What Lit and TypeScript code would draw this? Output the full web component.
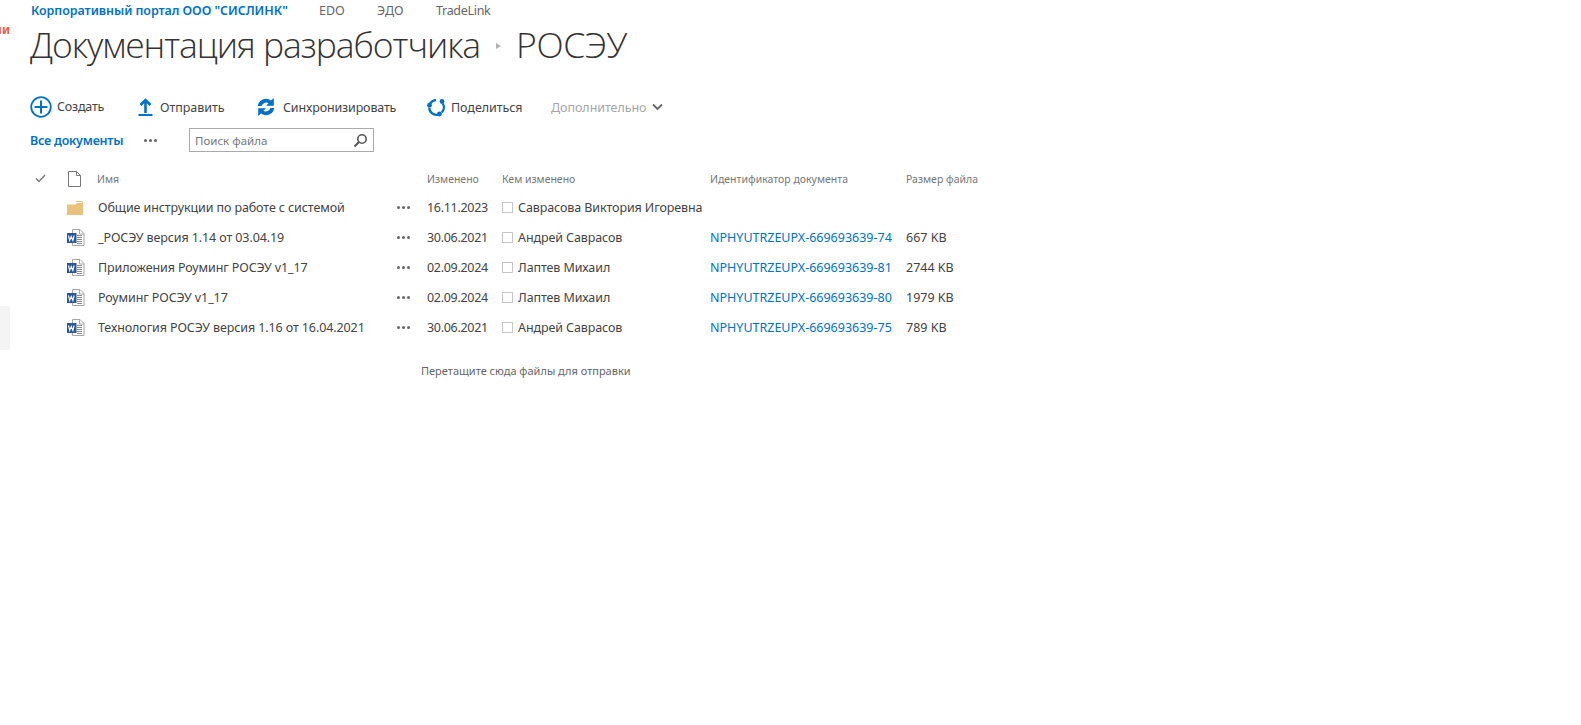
import { LitElement, html, css, svg } from "lit";
import { customElement } from "lit/decorators.js";

const wordIcon = svg`<svg class="ficon" width="18" height="17" viewBox="0 0 18 17">
  <path d="M5.5 .5H13L17 4.5V16.5H5.5Z" fill="#fff" stroke="#a6a6a6"/>
  <path d="M12.5 .5V5H17" fill="none" stroke="#a6a6a6"/>
  <path d="M10 6.5h5M10 8.5h5M10 10.5h5M10 12.5h5M10 14.5h5" stroke="#8a8a8a"/>
  <rect x="0" y="4" width="9.5" height="10" fill="#2b579a"/>
  <path d="M1.5 6.5l1.2 5 1.6-4 1.6 4 1.2-5" fill="none" stroke="#fff" stroke-width="1.1"/>
</svg>`;

const folderIcon = svg`<svg class="ficon" width="16" height="14" viewBox="0 0 16 14">
  <path d="M9 1.5V.5H15.5V2" fill="none" stroke="#e9c27f"/>
  <path d="M0 3.5H8.5L10 2H16V14H0Z" fill="#e9c27f"/>
</svg>`;

interface Row { name: string; date: string; author: string; id: string; size: string; folder?: boolean }

const rows: Row[] = [
  { name: "Общие инструкции по работе с системой", date: "16.11.2023", author: "Саврасова Виктория Игоревна", id: "", size: "", folder: true },
  { name: "_РОСЭУ версия 1.14 от 03.04.19", date: "30.06.2021", author: "Андрей Саврасов", id: "NPHYUTRZEUPX-669693639-74", size: "667 KB" },
  { name: "Приложения Роуминг РОСЭУ v1_17", date: "02.09.2024", author: "Лаптев Михаил", id: "NPHYUTRZEUPX-669693639-81", size: "2744 KB" },
  { name: "Роуминг РОСЭУ v1_17", date: "02.09.2024", author: "Лаптев Михаил", id: "NPHYUTRZEUPX-669693639-80", size: "1979 KB" },
  { name: "Технология РОСЭУ версия 1.16 от 16.04.2021", date: "30.06.2021", author: "Андрей Саврасов", id: "NPHYUTRZEUPX-669693639-75", size: "789 KB" },
];

@customElement("app-root")
export class AppRoot extends LitElement {
  static styles = css`
    :host {
      display: block;
      position: relative;
      width: 1581px;
      height: 725px;
      overflow: hidden;
      background: #fff;
      font-family: "Noto Sans", "Open Sans", sans-serif;
      font-size: 12.5px;
      color: #444;
    }
    .clip { position: absolute; right: calc(100% - 10px); top: 21px; font-size: 12px; font-weight: 700; color: #e8603c; line-height: 18px; white-space: nowrap; }
    .side { position: absolute; left: 0; top: 306px; width: 10px; height: 44px; background: #f4f4f4; }
    .page { padding-left: 30px; display: flex; flex-direction: column; }
    .nav { display: flex; height: 20px; align-items: center; font-size: 12.5px; color: #666; padding-left: 1px; }
    .brand { color: #0072c6; font-weight: 600; width: 288px; white-space: nowrap; letter-spacing: -.06px; }
    .edo { width: 58px; }
    .edo2 { width: 59px; }
    .trade { letter-spacing: -.3px; }
    .title { display: flex; align-items: center; font-size: 35.5px; font-weight: 300; color: #333; height: 48px; font-family: "Open Sans", sans-serif; letter-spacing: -.35px; white-space: nowrap; }
    .t1 { letter-spacing: -1.07px; }
    .tri { width: 0; height: 0; border-left: 5px solid #b1b1b1; border-top: 3.5px solid transparent; border-bottom: 3.5px solid transparent; margin: 4px 15px 0 16px; }
    .cmds { display: flex; align-items: center; height: 30px; margin-top: 24px; font-size: 12.5px; color: #444; }
    .cmd { display: flex; align-items: center; gap: 5px; white-space: nowrap; }
    .cmd svg { display: block; }
    .c1 { width: 108px; letter-spacing: -.2px; }
    .c2 { width: 119px; }
    .c3 { width: 170px; }
    .c4 { width: 124px; }
    .muted { color: #a6a6a6; gap: 5px; }
    .ls { letter-spacing: -.05px; }
    .ls2 { letter-spacing: -.15px; }
    .up { position: relative; top: -1px; }
    .views { display: flex; align-items: center; height: 26px; margin-top: 5px; }
    .all { color: #0072c6; font-weight: 600; width: 114px; white-space: nowrap; letter-spacing: -.22px; }
    .dots { display: flex; gap: 2px; }
    .dots i { width: 3px; height: 3px; border-radius: 50%; background: #666; display: block; }
    .vdots { width: 45px; }
    .search { box-sizing: border-box; width: 185px; height: 24px; border: 1px solid #ababab; display: flex; align-items: center; justify-content: space-between; padding: 0 5px; color: #777; font-size: 11.5px; }
    .table { display: grid; grid-template-columns: 36px 32px 299px 30px 75px 16px 192px 196px auto; grid-template-rows: 29px 29px; grid-auto-rows: 30px; margin-top: 11px; width: 1000px; align-items: center; white-space: nowrap; }
    .table .h { color: #777; font-size: 10.5px; }
    .nudge { margin-left: -1px; }
    .check { padding-left: 5px; }
    .ficon { display: block; margin-left: 1px; }
    .docico { display: block; margin-left: 2px; }
    .box { width: 9px; height: 9px; border: 1px solid #c6c6c6; display: block; }
    .link { color: #0072c6; }
    .name { color: #444; letter-spacing: -.1px; }
    .date { letter-spacing: -.3px; }
    .author { letter-spacing: -.1px; }
    .drop { margin: 19px 0 0 391px; font-size: 11px; color: #666; height: 20px; line-height: 20px; }
  `;

  render() {
    return html`
      <div class="clip">ии</div>
      <div class="side"></div>
      <div class="page">
        <div class="nav">
          <span class="brand">Корпоративный портал ООО "СИСЛИНК"</span>
          <span class="edo">EDO</span><span class="edo2">ЭДО</span><span class="trade">TradeLink</span>
        </div>
        <div class="title"><span class="t1">Документация разработчика</span><span class="tri"></span><span>РОСЭУ</span></div>
        <div class="cmds">
          <div class="cmd c1">
            <svg width="22" height="22" viewBox="0 0 22 22"><circle cx="11" cy="11" r="9.8" fill="none" stroke="#0072c6" stroke-width="1.8"/><path d="M11 4.5v13M4.500 11h13" stroke="#0072c6" stroke-width="2"/></svg>
            <span class="up">Создать</span>
          </div>
          <div class="cmd c2">
            <svg width="15" height="18" viewBox="0 0 15 18"><path d="M7.500 15V2M2.500 7L7.500 2l5 5" fill="none" stroke="#0072c6" stroke-width="2.600"/><path d="M.5 17h14" stroke="#0072c6" stroke-width="2"/></svg>
            <span class="ls" style="margin-left:2px">Отправить</span>
          </div>
          <div class="cmd c3">
            <svg width="18" height="20" viewBox="0 0 18 20"><path d="M.8 9A8.200 8.200 0 0 1 14 3.600L16.800 1V8.800H9L11.600 6.200A4.800 4.800 0 0 0 4.600 9Z" fill="#0072c6"/><path d="M17.200 11A8.200 8.200 0 0 1 4 16.400L1.200 19V11.200H9L6.400 13.800A4.800 4.800 0 0 0 13.400 11Z" fill="#0072c6"/></svg>
            <span class="ls2" style="margin-left:3px">Синхронизировать</span>
          </div>
          <div class="cmd c4">
            <svg width="19" height="19" viewBox="0 0 19 19"><path d="M9 2.200A7.300 7.300 0 0 0 3.200 5.500M2.300 9.500A7.300 7.300 0 0 0 11 16.800M14.700 14.500A7.300 7.300 0 0 0 15.800 5.500" fill="none" stroke="#0072c6" stroke-width="2.300"/><circle cx="15" cy="3.500" r="2.400" fill="#0072c6"/><circle cx="2.500" cy="7.200" r="2.400" fill="#0072c6"/><circle cx="12.500" cy="16" r="2.400" fill="#0072c6"/></svg>
            <span class="ls">Поделиться</span>
          </div>
          <div class="cmd muted">
            <span class="ls">Дополнительно</span>
            <svg width="11" height="8" viewBox="0 0 11 8"><path d="M1 1.500l4.500 4.500L10 1.500" fill="none" stroke="#666" stroke-width="1.800"/></svg>
          </div>
        </div>
        <div class="views">
          <span class="all">Все документы</span>
          <div class="vdots"><div class="dots"><i></i><i></i><i></i></div></div>
          <div class="search">
            <span>Поиск файла</span>
            <svg width="15" height="15" viewBox="0 0 15 15"><circle cx="9" cy="6" r="4.200" fill="none" stroke="#555" stroke-width="1.600"/><path d="M6 9l-4.500 4.500" stroke="#555" stroke-width="2"/></svg>
          </div>
        </div>
        <div class="table">
          <div class="check"><svg width="11" height="9" viewBox="0 0 11 9" style="display:block"><path d="M1 4.500l3 3L10 1" fill="none" stroke="#777" stroke-width="1.400"/></svg></div>
          <svg class="docico" width="13" height="16" viewBox="0 0 13 16"><path d="M.5 .5H8.500L12.500 4.500V15.500H.5Z M8.500 .5V4.500H12.500" fill="none" stroke="#777"/></svg>
          <div class="h nudge">Имя</div>
          <div></div>
          <div class="h">Изменено</div>
          <div class="h" style="grid-column: span 2">Кем изменено</div>
          <div class="h">Идентификатор документа</div>
          <div class="h">Размер файла</div>
          ${rows.map(
            (r) => html`
              <div></div>
              <div>${r.folder ? folderIcon : wordIcon}</div>
              <div class="name">${r.name}</div>
              <div class="dots"><i></i><i></i><i></i></div>
              <div class="date">${r.date}</div>
              <div><span class="box"></span></div>
              <div class="author">${r.author}</div>
              <div class="link">${r.id}</div>
              <div>${r.size}</div>
            `
          )}
        </div>
        <div class="drop">Перетащите сюда файлы для отправки</div>
      </div>
    `;
  }
}
